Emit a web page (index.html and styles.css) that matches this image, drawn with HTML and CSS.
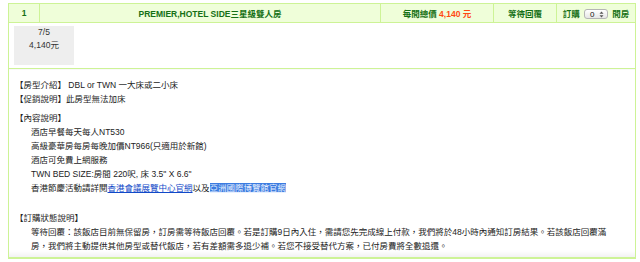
FILE: index.html
```html
<!DOCTYPE html>
<html lang="zh-TW">
<head>
    <meta charset="UTF-8">
    <title>訂房明細</title>
    <link rel="stylesheet" href="styles.css">
</head>
<body>
    <table class="room-table">
        <tr class="room-head">
            <td class="col-no">1</td>
            <td class="col-name">PREMIER,HOTEL SIDE三星級雙人房</td>
            <td class="col-price">每間總價 <span class="price">4,140 元</span></td>
            <td class="col-status">等待回覆</td>
            <td class="col-order">
                訂購
                <span class="qty">
                    <span class="qty-val">0</span>
                    <svg class="qty-arrow" width="5" height="7" viewBox="0 0 5 7">
                        <path d="M2.5 0.5 L4.5 2.8 L0.5 2.8 Z M2.5 6.5 L4.5 4.2 L0.5 4.2 Z" fill="#555"/>
                    </svg>
                </span>
                間房
            </td>
        </tr>
        <tr>
            <td colspan="5" class="day-cell">
                <div class="day-box">
                    <div>7/5</div>
                    <div>4,140元</div>
                </div>
            </td>
        </tr>
        <tr>
            <td colspan="5" class="desc-cell">
                <div class="desc-group">
                    <div>【房型介紹】 DBL or TWN 一大床或二小床</div>
                    <div>【促銷說明】此房型無法加床</div>
                </div>
                <div class="desc-group content">
                    <div>【內容說明】</div>
                    <div class="desc-list">
                        <div>酒店早餐每天每人NT530</div>
                        <div>高級豪華房每房每晚加價NT966(只適用於新館)</div>
                        <div>酒店可免費上網服務</div>
                        <div>TWN BED SIZE:房間 220呎, 床 3.5" X 6.6"</div>
                        <div>香港節慶活動請詳閱<a href="#" class="link">香港會議展覽中心官網</a>以及<a href="#" class="link selected">亞洲國際博覽館官網</a></div>
                    </div>
                </div>
                <div class="desc-group status">
                    <div>【訂購狀態說明】</div>
                    <div class="desc-list status-text">等待回覆：該飯店目前無保留房，訂房需等待飯店回覆。若是訂購9日內入住，需請您先完成線上付款，我們將於48小時內通知訂房結果。若該飯店回覆滿房，我們將主動提供其他房型或替代飯店，若有差額需多退少補。若您不接受替代方案，已付房費將全數退還。</div>
                </div>
            </td>
        </tr>
    </table>
</body>
</html>
```

FILE: styles.css
```css
body {
    margin: 0;
    padding: 3px 0 0 8px;
    font-family: "Liberation Sans", "Noto Sans CJK TC", Arial, sans-serif;
    font-size: 8.5px;
    color: #222;
    background: #fff;
}
.room-table {
    width: 628px;
    border-collapse: collapse;
    table-layout: fixed;
}
.room-table td {
    border: 1px solid #cdf396;
    padding: 0;
}
.room-head td {
    height: 18px;
    background: #effed9;
    color: #157015;
    font-weight: bold;
    text-align: center;
    vertical-align: middle;
    white-space: nowrap;
}
.col-no { width: 30px; }
.col-name { width: 340px; }
.col-price { width: 112px; }
.col-status { width: 62px; }
.price { color: #ff4a12; }
.col-order {
    font-size: 8.5px;
}
.qty {
    display: inline-flex;
    align-items: center;
    justify-content: space-between;
    width: 24px;
    height: 10px;
    margin: 0 2px;
    padding: 0 3px 0 5px;
    box-sizing: border-box;
    vertical-align: middle;
    border: 1px solid #b5b5b5;
    border-radius: 3px;
    background: linear-gradient(to bottom, #ffffff, #e6e6e6);
    color: #111;
    font-weight: normal;
    font-size: 8px;
}
.qty-arrow { display: block; }
.day-cell {
    padding: 3px 5px !important;
}
.day-box {
    width: 60px;
    height: 39px;
    background: #eeeeee;
    text-align: center;
    line-height: 13px;
    color: #333;
}
.desc-cell {
    padding: 9px 7px 4px 6px !important;
    line-height: 14px;
    color: #222;
    background: linear-gradient(to bottom, #fff calc(100% - 7px), #f1f1f1);
    border-bottom-width: 2px !important;
}
.desc-group.content { margin-top: 5px; }
.desc-group.status { margin-top: 16px; }
.desc-list {
    padding-left: 16px;
}
.status-text {
    width: 582px;
}
.link {
    color: #1149c8;
    text-decoration: underline;
}
.link.selected {
    background: #3b7be0;
    color: #e8f0ff;
}
```
